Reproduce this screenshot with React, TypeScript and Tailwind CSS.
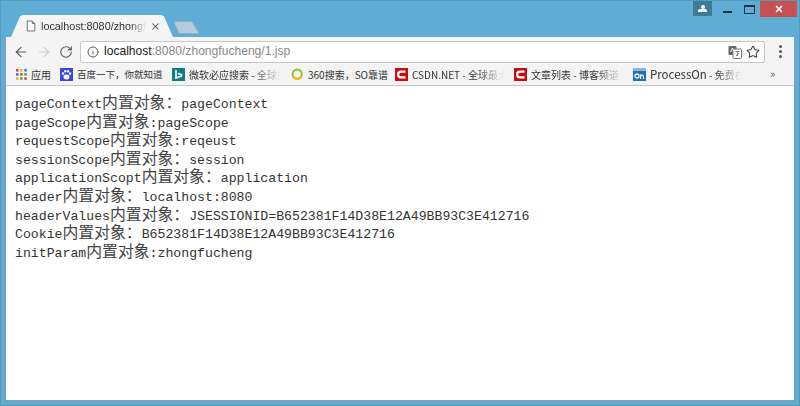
import React from 'react';
import { ArrowLeft, ArrowRight, RotateCw, Info, Star, X } from 'lucide-react';

const ui = "font-['Liberation_Sans','Noto_Sans_CJK_SC',sans-serif]";

const Cjk: React.FC<{ children: React.ReactNode }> = ({ children }) => (
  <span className="font-['Noto_Sans_CJK_SC',sans-serif] text-[15.84px] text-[#444]">{children}</span>
);

const rows: [string, string, string][] = [
  ['pageContext', '：', 'pageContext'],
  ['pageScope', ':', 'pageScope'],
  ['requestScope', ':', 'reqeust'],
  ['sessionScope', '：', 'session'],
  ['applicationScopt', '：', 'application'],
  ['header', '：', 'localhost:8080'],
  ['headerValues', '：', 'JSESSIONID=B652381F14D38E12A49BB93C3E412716'],
  ['Cookie', '：', 'B652381F14D38E12A49BB93C3E412716'],
  ['initParam', ':', 'zhongfucheng'],
];

const Bookmark: React.FC<{
  icon: React.ReactNode;
  label: React.ReactNode;
  width: string;
  labelClass?: string;
}> = ({ icon, label, width, labelClass = 'text-[10px]' }) => (
  <div className={`flex items-center shrink-0 ${width}`}>
    <span className="w-[13px] h-[13px] shrink-0 mr-[4px]">{icon}</span>
    <span className={`whitespace-nowrap text-[#333333] ${labelClass}`}>{label}</span>
  </div>
);

const fade = 'w-[92px] overflow-hidden text-[10px] [mask-image:linear-gradient(to_right,black_70%,transparent_100%)]';

const CsdnIcon = () => (
  <svg viewBox="0 0 13 13" className="w-[13px] h-[13px]">
    <rect width="13" height="13" fill="#c80d12" />
    <path d="M10.5 3.6H6a2.9 2.9 0 0 0 0 5.8h4.5" fill="none" stroke="#fff" strokeWidth="2.2" />
  </svg>
);

export default function App() {
  return (
    <div
      className={`w-[800px] h-[406px] overflow-hidden bg-[#5fadd4] border border-[#4f9bc2] flex flex-col px-[4px] pb-[4px] ${ui}`}
    >
      <div className="h-[36px] shrink-0 flex items-start">
        <div className="relative mt-[14px] ml-[6px] w-[162px] h-[22px] shrink-0 flex items-center">
          <svg viewBox="0 0 162 22" className="absolute inset-0 w-full h-full" preserveAspectRatio="none">
            <path d="M0 22 L9 1.5 Q10 0 12 0 L150 0 Q152 0 153 1.5 L162 22 Z" fill="#f5f5f5" />
          </svg>
          <svg viewBox="0 0 12 14" className="relative ml-[15px] w-[10px] h-[12px]">
            <path d="M1.5 1H7.5L10.5 4V13H1.5Z M7.5 1V4H10.5" fill="#fff" stroke="#666" strokeWidth="1.1" />
          </svg>
          <span className="relative ml-[5px] w-[105px] overflow-hidden whitespace-nowrap text-[10.8px] text-[#333] [mask-image:linear-gradient(to_right,black_85%,transparent_100%)]">
            localhost:8080/zhongfucheng/1.jsp
          </span>
          <X className="relative ml-[4px] w-[11px] h-[11px] text-[#555]" strokeWidth={2.2} />
        </div>
        <svg viewBox="0 0 27 13" className="mt-[20px] w-[27px] h-[13px] shrink-0">
          <path d="M1 1 Q1 0.5 2 0.5 L19 0.5 L26 12.5 L6 12.5 Z" fill="#b3cbdb" stroke="#8fb2c6" />
        </svg>
        <div className="ml-auto -mr-[2px] -mt-[1px] flex items-start">
          <div className="w-[19px] h-[16px] bg-[#3f7b99] flex flex-col items-center justify-center">
            <span className="w-[4px] h-[4px] rounded-full bg-white" />
            <span className="w-[9px] h-[3px] bg-white rounded-t-[2px]" />
          </div>
          <span className="ml-[11px] mt-[11px] w-[9px] h-[2px] bg-[#1f3440]" />
          <span className="ml-[12px] mt-[5px] w-[11px] h-[9px] border border-[#1f3440] border-t-[2px]" />
          <div className="ml-[5px] w-[37px] h-[17px] bg-[#c75050] flex items-center justify-center">
            <X className="w-[10px] h-[10px] text-white" strokeWidth={4} />
          </div>
        </div>
      </div>

      <div className="flex-1 flex flex-col border border-t-0 border-[#8b9aa3] bg-white min-h-0">
        <div className="h-[27px] pt-[2px] shrink-0 bg-[#f4f4f4] flex items-center">
          <ArrowLeft className="ml-[7px] w-[16px] h-[16px] text-[#5a5a5a]" strokeWidth={1.8} />
          <ArrowRight className="ml-[7px] w-[16px] h-[16px] text-[#cfcfcf]" strokeWidth={1.8} />
          <RotateCw className="ml-[7px] w-[14px] h-[14px] text-[#5a5a5a]" strokeWidth={2} />
          <div className="ml-[7px] grow h-[22px] bg-white border border-[#c8c8c8] rounded-[2px] flex items-center">
            <Info className="ml-[6px] w-[12px] h-[12px] text-[#555] shrink-0" strokeWidth={2} />
            <span className="ml-[5px] text-[12.1px] text-[#222]">
              localhost<span className="text-[#888]">:8080/zhongfucheng/1.jsp</span>
            </span>
            <svg viewBox="0 0 14 14" className="ml-auto w-[14px] h-[14px] shrink-0">
              <rect x="0.5" y="1" width="8" height="9" rx="1" fill="#666" />
              <rect x="5" y="4" width="8.5" height="9.5" rx="1" fill="#fff" stroke="#777" />
              <path d="M7.5 6.5H11.5M9.5 6V11M8 11L11 8" stroke="#666" strokeWidth="0.8" fill="none" />
              <path d="M2.5 7L4.5 3L6 7" stroke="#fff" strokeWidth="0.9" fill="none" />
            </svg>
            <Star className="ml-[4px] mr-[4px] w-[14px] h-[14px] text-[#444] shrink-0" strokeWidth={1.8} />
          </div>
          <div className="ml-[14px] mr-[12px] flex flex-col gap-[2px]">
            <span className="w-[3px] h-[3px] rounded-full bg-[#555]" />
            <span className="w-[3px] h-[3px] rounded-full bg-[#555]" />
            <span className="w-[3px] h-[3px] rounded-full bg-[#555]" />
          </div>
        </div>

        <div className="h-[22px] shrink-0 bg-[#f4f4f4] border-b border-[#c4c4c4] flex items-center pl-[10px] font-['Noto_Sans_CJK_SC',sans-serif]">
          <Bookmark
            width="w-[44px]"
            label={<span className="-ml-[2px]">应用</span>}
            icon={
              <svg viewBox="0 0 12 12" className="w-[11px] h-[11px] mt-[1px]">
                {[0, 4.5, 9].map((y, r) =>
                  [0, 4.5, 9].map((x, c) => (
                    <rect
                      key={`${r}-${c}`}
                      x={x}
                      y={y}
                      width="2.8"
                      height="2.8"
                      fill={['#e0453a', '#f2b01e', '#3a7fe0', '#3a7fe0', '#e0453a', '#3cae54', '#f2b01e', '#3cae54', '#e0453a'][r * 3 + c]}
                    />
                  )),
                )}
              </svg>
            }
          />
          <Bookmark
            width="w-[112px]"
            labelClass="text-[9.5px]"
            label="百度一下，你就知道"
            icon={
              <svg viewBox="0 0 13 13" className="w-[13px] h-[13px]">
                <rect width="13" height="13" fill="#3a46e0" />
                <ellipse cx="6.5" cy="9" rx="3" ry="2.4" fill="#fff" />
                <circle cx="3" cy="5.5" r="1.2" fill="#fff" />
                <circle cx="5.2" cy="3.2" r="1.2" fill="#fff" />
                <circle cx="8" cy="3.2" r="1.2" fill="#fff" />
                <circle cx="10" cy="5.5" r="1.2" fill="#fff" />
              </svg>
            }
          />
          <Bookmark
            width="w-[119px]"
            labelClass={fade}
            label="微软必应搜索 - 全球搜索"
            icon={
              <svg viewBox="0 0 13 13" className="w-[13px] h-[13px]">
                <rect width="13" height="13" fill="#0f7c80" />
                <path d="M4 2V10L9.5 8V6.5L6 5.5" fill="none" stroke="#fff" strokeWidth="1.6" />
              </svg>
            }
          />
          <Bookmark
            width="w-[104px]"
            label="360搜索，SO靠谱"
            icon={
              <svg viewBox="0 0 13 13" className="w-[13px] h-[13px]">
                <circle cx="6.2" cy="6.2" r="4.6" fill="none" stroke="#8cc21f" strokeWidth="2" />
                <path d="M2 8.2A4.6 4.6 0 0 0 10.5 8" fill="none" stroke="#f5b915" strokeWidth="2" />
              </svg>
            }
          />
          <Bookmark width="w-[119px]" labelClass={fade} label="CSDN.NET - 全球最大中文" icon={<CsdnIcon />} />
          <Bookmark width="w-[119px]" labelClass={fade} label="文章列表 - 博客频道 - CSDN" icon={<CsdnIcon />} />
          <Bookmark
            width="w-[122px]"
            labelClass={fade}
            label={
              <>
                <span className="text-[11.5px]">ProcessOn</span> - 免费在线作图
              </>
            }
            icon={
              <svg viewBox="0 0 13 13" className="w-[13px] h-[13px]">
                <rect width="13" height="13" fill="#1f6fb5" />
                <rect y="0" width="13" height="3" fill="#8ab8dd" />
                <circle cx="4" cy="8" r="2" fill="none" stroke="#fff" strokeWidth="1.3" />
                <path d="M7.6 11V6.5M7.6 8Q10.6 5 10.6 11" fill="none" stroke="#fff" strokeWidth="1.2" />
              </svg>
            }
          />
          <span className="ml-[15px] text-[11px] text-[#555] leading-none pb-[3px]">»</span>
        </div>

        <div className="flex-1 pt-[7px] pl-[9px] font-['Liberation_Mono',monospace] text-[13.2px] leading-[18.6px] text-[#333]">
          {rows.map(([name, colon, value]) => (
            <div key={name} className="h-[18.6px] whitespace-nowrap">
              {name}
              <Cjk>内置对象{colon === '：' ? '：' : ''}</Cjk>
              {colon === ':' ? ':' : ''}
              {value}
            </div>
          ))}
        </div>
      </div>
    </div>
  );
}
